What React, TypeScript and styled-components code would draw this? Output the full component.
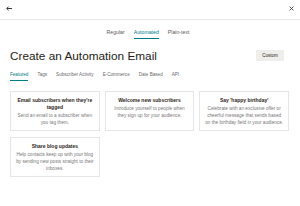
import React from "react";
import styled, { createGlobalStyle } from "styled-components";

const Global = createGlobalStyle`
  html, body { margin: 0; padding: 0; background: #ffffff; }
  body {
    font-family: "Liberation Sans", Arial, sans-serif;
    color: #241c15;
  }
  * { box-sizing: border-box; }
`;

const Page = styled.div`
  width: 300px;
  height: 206px;
  background: #fff;
  overflow: hidden;
`;

const TopBar = styled.div`
  height: 20px;
  border-bottom: 1px solid #e8e8e8;
  display: flex;
  align-items: center;
  justify-content: space-between;
  padding: 0 6px 2px 6px;
`;

const IconButton = styled.div`
  display: flex;
  align-items: center;
  justify-content: center;
  color: #3b3b3b;
`;

const Tabs = styled.div`
  display: flex;
  justify-content: center;
  gap: 9px;
  margin-top: 9px;
  padding-right: 4px;
`;

const Tab = styled.div<{ $active?: boolean }>`
  font-size: 5.2px;
  line-height: 7px;
  padding-bottom: 2px;
  color: ${(p) => (p.$active ? "#007c89" : "#5c5c5c")};
  border-bottom: 1.2px solid ${(p) => (p.$active ? "#007c89" : "transparent")};
`;

const Content = styled.div`
  padding: 0 11px 0 10px;
`;

const TitleRow = styled.div`
  display: flex;
  align-items: center;
  justify-content: space-between;
  margin-top: 9.5px;
  padding-right: 5px;
`;

const Title = styled.h1`
  margin: 0;
  font-size: 11.8px;
  line-height: 14px;
  font-weight: 400;
  color: #241c15;
`;

const Button = styled.div`
  width: 28px;
  height: 11px;
  background: #efeeea;
  font-size: 4.5px;
  color: #241c15;
  display: flex;
  align-items: center;
  justify-content: center;
`;

const SubTabs = styled.div`
  display: flex;
  gap: 9px;
  margin-top: 9.5px;
`;

const SubTab = styled.div<{ $active?: boolean }>`
  font-size: 4.6px;
  line-height: 6px;
  padding-bottom: 2px;
  color: ${(p) => (p.$active ? "#007c89" : "#6a6a6a")};
  border-bottom: 1px solid ${(p) => (p.$active ? "#007c89" : "transparent")};
`;

const Grid = styled.div`
  display: grid;
  grid-template-columns: repeat(3, 1fr);
  column-gap: 5px;
  row-gap: 6px;
  margin-top: 9.5px;
`;

const Card = styled.div`
  border: 1px solid #e6e6e6;
  padding: 5px 4px 4px;
  text-align: center;
`;

const CardTitle = styled.div`
  font-size: 5px;
  line-height: 7.3px;
  font-weight: 700;
  color: #2d2520;
  margin-bottom: 1px;
`;

const CardText = styled.div`
  font-size: 4.7px;
  line-height: 7px;
  color: #777;
`;

const Line = styled.span`
  display: block;
  white-space: nowrap;
`;

const cards = [
  {
    title: "Email subscribers when they're tagged",
    lines: ["Send an email to a subscriber when", "you tag them."],
  },
  {
    title: "Welcome new subscribers",
    lines: ["Introduce yourself to people when", "they sign up for your audience."],
  },
  {
    title: "Say 'happy birthday'",
    lines: [
      "Celebrate with an exclusive offer or",
      "cheerful message that sends based",
      "on the birthday field in your audience.",
    ],
  },
  {
    title: "Share blog updates",
    lines: [
      "Help contacts keep up with your blog",
      "by sending new posts straight to their",
      "inboxes.",
    ],
  },
];

export default function App() {
  return (
    <Page>
      <Global />
      <TopBar>
        <IconButton>
          <svg width="6" height="5" viewBox="0 0 6 5">
            <path d="M6 2.5H1M2.6 0.6L0.7 2.5L2.6 4.4" stroke="#3b3b3b" strokeWidth="1" fill="none" />
          </svg>
        </IconButton>
        <IconButton>
          <svg width="5" height="5" viewBox="0 0 5 5">
            <path d="M0.6 0.6L4.4 4.4M4.4 0.6L0.6 4.4" stroke="#3b3b3b" strokeWidth="0.9" fill="none" />
          </svg>
        </IconButton>
      </TopBar>
      <Tabs>
        <Tab>Regular</Tab>
        <Tab $active>Automated</Tab>
        <Tab>Plain-text</Tab>
      </Tabs>
      <Content>
        <TitleRow>
          <Title>Create an Automation Email</Title>
          <Button>Custom</Button>
        </TitleRow>
        <SubTabs>
          <SubTab $active>Featured</SubTab>
          <SubTab>Tags</SubTab>
          <SubTab>Subscriber Activity</SubTab>
          <SubTab>E-Commerce</SubTab>
          <SubTab>Date Based</SubTab>
          <SubTab>API</SubTab>
        </SubTabs>
        <Grid>
          {cards.map((c) => (
            <Card key={c.title}>
              <CardTitle>{c.title}</CardTitle>
              <CardText>
                {c.lines.map((l) => (
                  <Line key={l}>{l}</Line>
                ))}
              </CardText>
            </Card>
          ))}
        </Grid>
      </Content>
    </Page>
  );
}
